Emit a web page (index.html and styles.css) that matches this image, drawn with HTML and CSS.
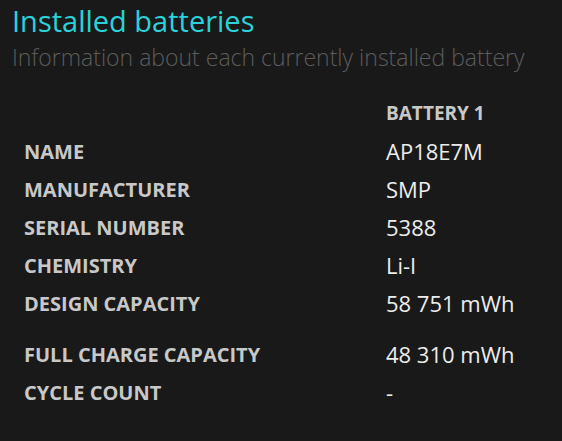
FILE: index.html
```html
<!DOCTYPE html>
<html>
<head>
<meta charset="utf-8">
<link rel="stylesheet" href="styles.css">
</head>
<body>
<div class="page">
  <h1 class="title">Installed batteries</h1>
  <p class="subtitle">Information about each currently installed battery</p>
  <table class="info">
    <thead>
      <tr><th class="label"></th><th class="col-head">BATTERY 1</th></tr>
    </thead>
    <tbody>
      <tr><td class="label">NAME</td><td class="value">AP18E7M</td></tr>
      <tr><td class="label">MANUFACTURER</td><td class="value">SMP</td></tr>
      <tr><td class="label">SERIAL NUMBER</td><td class="value">5388</td></tr>
      <tr><td class="label">CHEMISTRY</td><td class="value">Li-I</td></tr>
      <tr><td class="label">DESIGN CAPACITY</td><td class="value">58 751 mWh</td></tr>
      <tr class="spacer"><td colspan="2"></td></tr>
      <tr><td class="label">FULL CHARGE CAPACITY</td><td class="value">48 310 mWh</td></tr>
      <tr><td class="label">CYCLE COUNT</td><td class="value">-</td></tr>
    </tbody>
  </table>
</div>
</body>
</html>
```
FILE: styles.css
```css
html, body {
  margin: 0;
  padding: 0;
  background: #191919;
}
.page {
  padding: 4px 0 0 12px;
  font-family: "Open Sans", "Noto Sans", sans-serif;
}
.title {
  margin: 0;
  font-size: 29px;
  font-weight: 400;
  line-height: 34px;
  color: #2ad2da;
}
.subtitle {
  margin: 5px 0 0 0;
  font-size: 23px;
  font-weight: 300;
  line-height: 28px;
  color: #5c5c5c;
}
.info {
  border-collapse: collapse;
  margin: 23px 0 0 12px;
}
.info th, .info td {
  padding: 0;
  text-align: left;
  vertical-align: middle;
}
.label {
  width: 362px;
  height: 38px;
  font-size: 20px;
  font-weight: 700;
  color: #c8c8c8;
}
.col-head {
  height: 32px;
  font-size: 19px;
  font-weight: 700;
  color: #c8c8c8;
}
.value {
  font-size: 22px;
  font-weight: 400;
  color: #ececec;
}
.spacer td {
  height: 13px;
}
```
